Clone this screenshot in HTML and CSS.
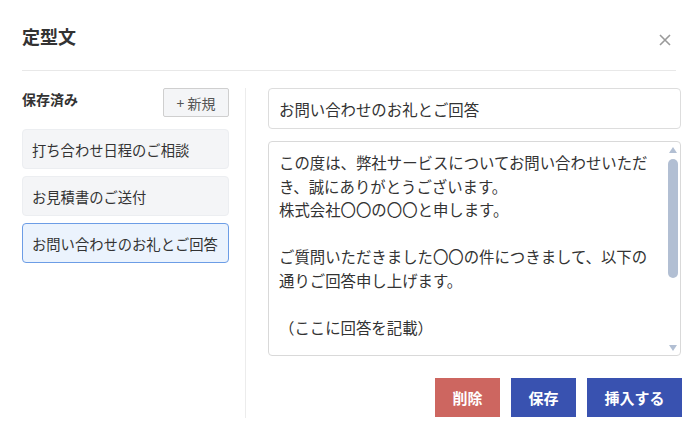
FILE: index.html
```html
<!DOCTYPE html>
<html lang="ja">
<head>
    <meta charset="UTF-8">
    <meta name="viewport" content="width=device-width, initial-scale=1.0">
    <title>定型文</title>
    <link rel="stylesheet" href="styles.css">
</head>
<body>

    <div class="dialog">
        <div class="dialog-header">
            <h2>定型文</h2>
            <button class="close-btn" aria-label="閉じる">
                <svg width="12" height="12" viewBox="0 0 12 12"><path d="M1 1L11 11M11 1L1 11" stroke="#9a9a9a" stroke-width="1.6" fill="none"/></svg>
            </button>
        </div>

        <div class="dialog-body">
            <div class="sidebar">
                <div class="sidebar-head">
                    <span class="sidebar-title">保存済み</span>
                    <button class="new-btn">+ 新規</button>
                </div>
                <ul class="template-list">
                    <li class="template-item">打ち合わせ日程のご相談</li>
                    <li class="template-item">お見積書のご送付</li>
                    <li class="template-item active">お問い合わせのお礼とご回答</li>
                </ul>
            </div>

            <div class="editor">
                <input type="text" class="title-input" value="お問い合わせのお礼とご回答">
                <div class="body-wrap">
                    <textarea class="body-input">この度は、弊社サービスについてお問い合わせいただき、誠にありがとうございます。
株式会社〇〇の〇〇と申します。

ご質問いただきました〇〇の件につきまして、以下の通りご回答申し上げます。

（ここに回答を記載）

ご不明な点がございましたら、お気軽にお問い合わせください。

今後ともどうぞよろしくお願いいたします。</textarea>
                    <!-- scrollbar drawn by hand so it looks the same everywhere -->
                    <div class="scrollbar">
                        <svg width="8" height="6" viewBox="0 0 8 6"><path d="M4 0L8 6H0z" fill="#b2bfd3"/></svg>
                        <div class="scroll-thumb"></div>
                        <svg class="scroll-down" width="8" height="6" viewBox="0 0 8 6"><path d="M0 0H8L4 6z" fill="#b2bfd3"/></svg>
                    </div>
                </div>
                <div class="actions">
                    <button class="btn btn-danger">削除</button>
                    <button class="btn btn-primary">保存</button>
                    <button class="btn btn-primary">挿入する</button>
                </div>
            </div>
        </div>
    </div>

</body>
</html>
```

FILE: styles.css
```css
body { margin: 0; padding: 0; background: #fff; color: #333; font-family: "Noto Sans CJK JP", "Noto Sans", sans-serif; }
.dialog { width: 698px; height: 437px; display: flex; flex-direction: column; box-sizing: border-box; }

.dialog-header { display: flex; align-items: center; justify-content: space-between; margin: 0 22px; padding: 23px 0 21px; border-bottom: 1px solid #e8e8e8; }
.dialog-header h2 { margin: 0; font-size: 18px; line-height: 26px; font-weight: 700; color: #333; }
.close-btn { background: none; border: none; padding: 0; margin-right: 5px; width: 12px; height: 12px; display: flex; margin-top: 8px; }

.dialog-body { flex: 1; display: flex; padding: 17px 17px 19px 22px; }

.sidebar { width: 207px; padding-right: 16px; border-right: 1px solid #ececec; }
.sidebar-head { display: flex; justify-content: space-between; align-items: flex-start; margin-bottom: 12px; }
.sidebar-title { font-size: 14px; font-weight: 700; line-height: 22px; }
.new-btn { width: 66px; height: 29px; font: inherit; font-size: 14px; color: #555; background: #f4f5f7; border: 1px solid #cfcfcf; border-radius: 2px; padding: 0; }

.template-list { list-style: none; margin: 0; padding: 0; display: flex; flex-direction: column; gap: 7px; }
.template-item { height: 40px; box-sizing: border-box; display: flex; align-items: center; padding: 0 9px; font-size: 14.3px; white-space: nowrap; background: #f4f5f7; border: 1px solid #eceef1; border-radius: 4px; }
.template-item.active { background: #ebf3fd; border-color: #6c9de6; }

.editor { flex: 1; padding-left: 22px; display: flex; flex-direction: column; }
.title-input { height: 41px; box-sizing: border-box; padding: 0 10px; font: inherit; font-size: 15.4px; color: #333; border: 1px solid #ddd; border-radius: 4px; outline: none; }

.body-wrap { position: relative; margin-top: 12px; height: 215px; }
.body-input { display: block; width: 100%; height: 100%; box-sizing: border-box; padding: 9px 22px 9px 10px; font: inherit; font-size: 15.4px; line-height: 23.5px; color: #333; border: 1px solid #d9d9d9; border-radius: 4px; resize: none; outline: none; overflow: hidden; }

.scrollbar { position: absolute; top: 6px; bottom: 5px; right: 3px; width: 10px; display: flex; flex-direction: column; align-items: center; }
.scroll-thumb { margin-top: 6px; width: 10px; height: 119px; background: #b2bfd3; border-radius: 5px; }
.scroll-down { margin-top: auto; }

.actions { margin-top: 22px; margin-right: -1px; display: flex; justify-content: flex-end; gap: 11px; }
.btn { height: 39px; padding: 0 17.5px; font: inherit; font-size: 15px; font-weight: 700; color: #fff; border: none; border-radius: 0; }
.btn-danger { background: #cd6660; }
.btn-primary { background: #3952b0; }
```
